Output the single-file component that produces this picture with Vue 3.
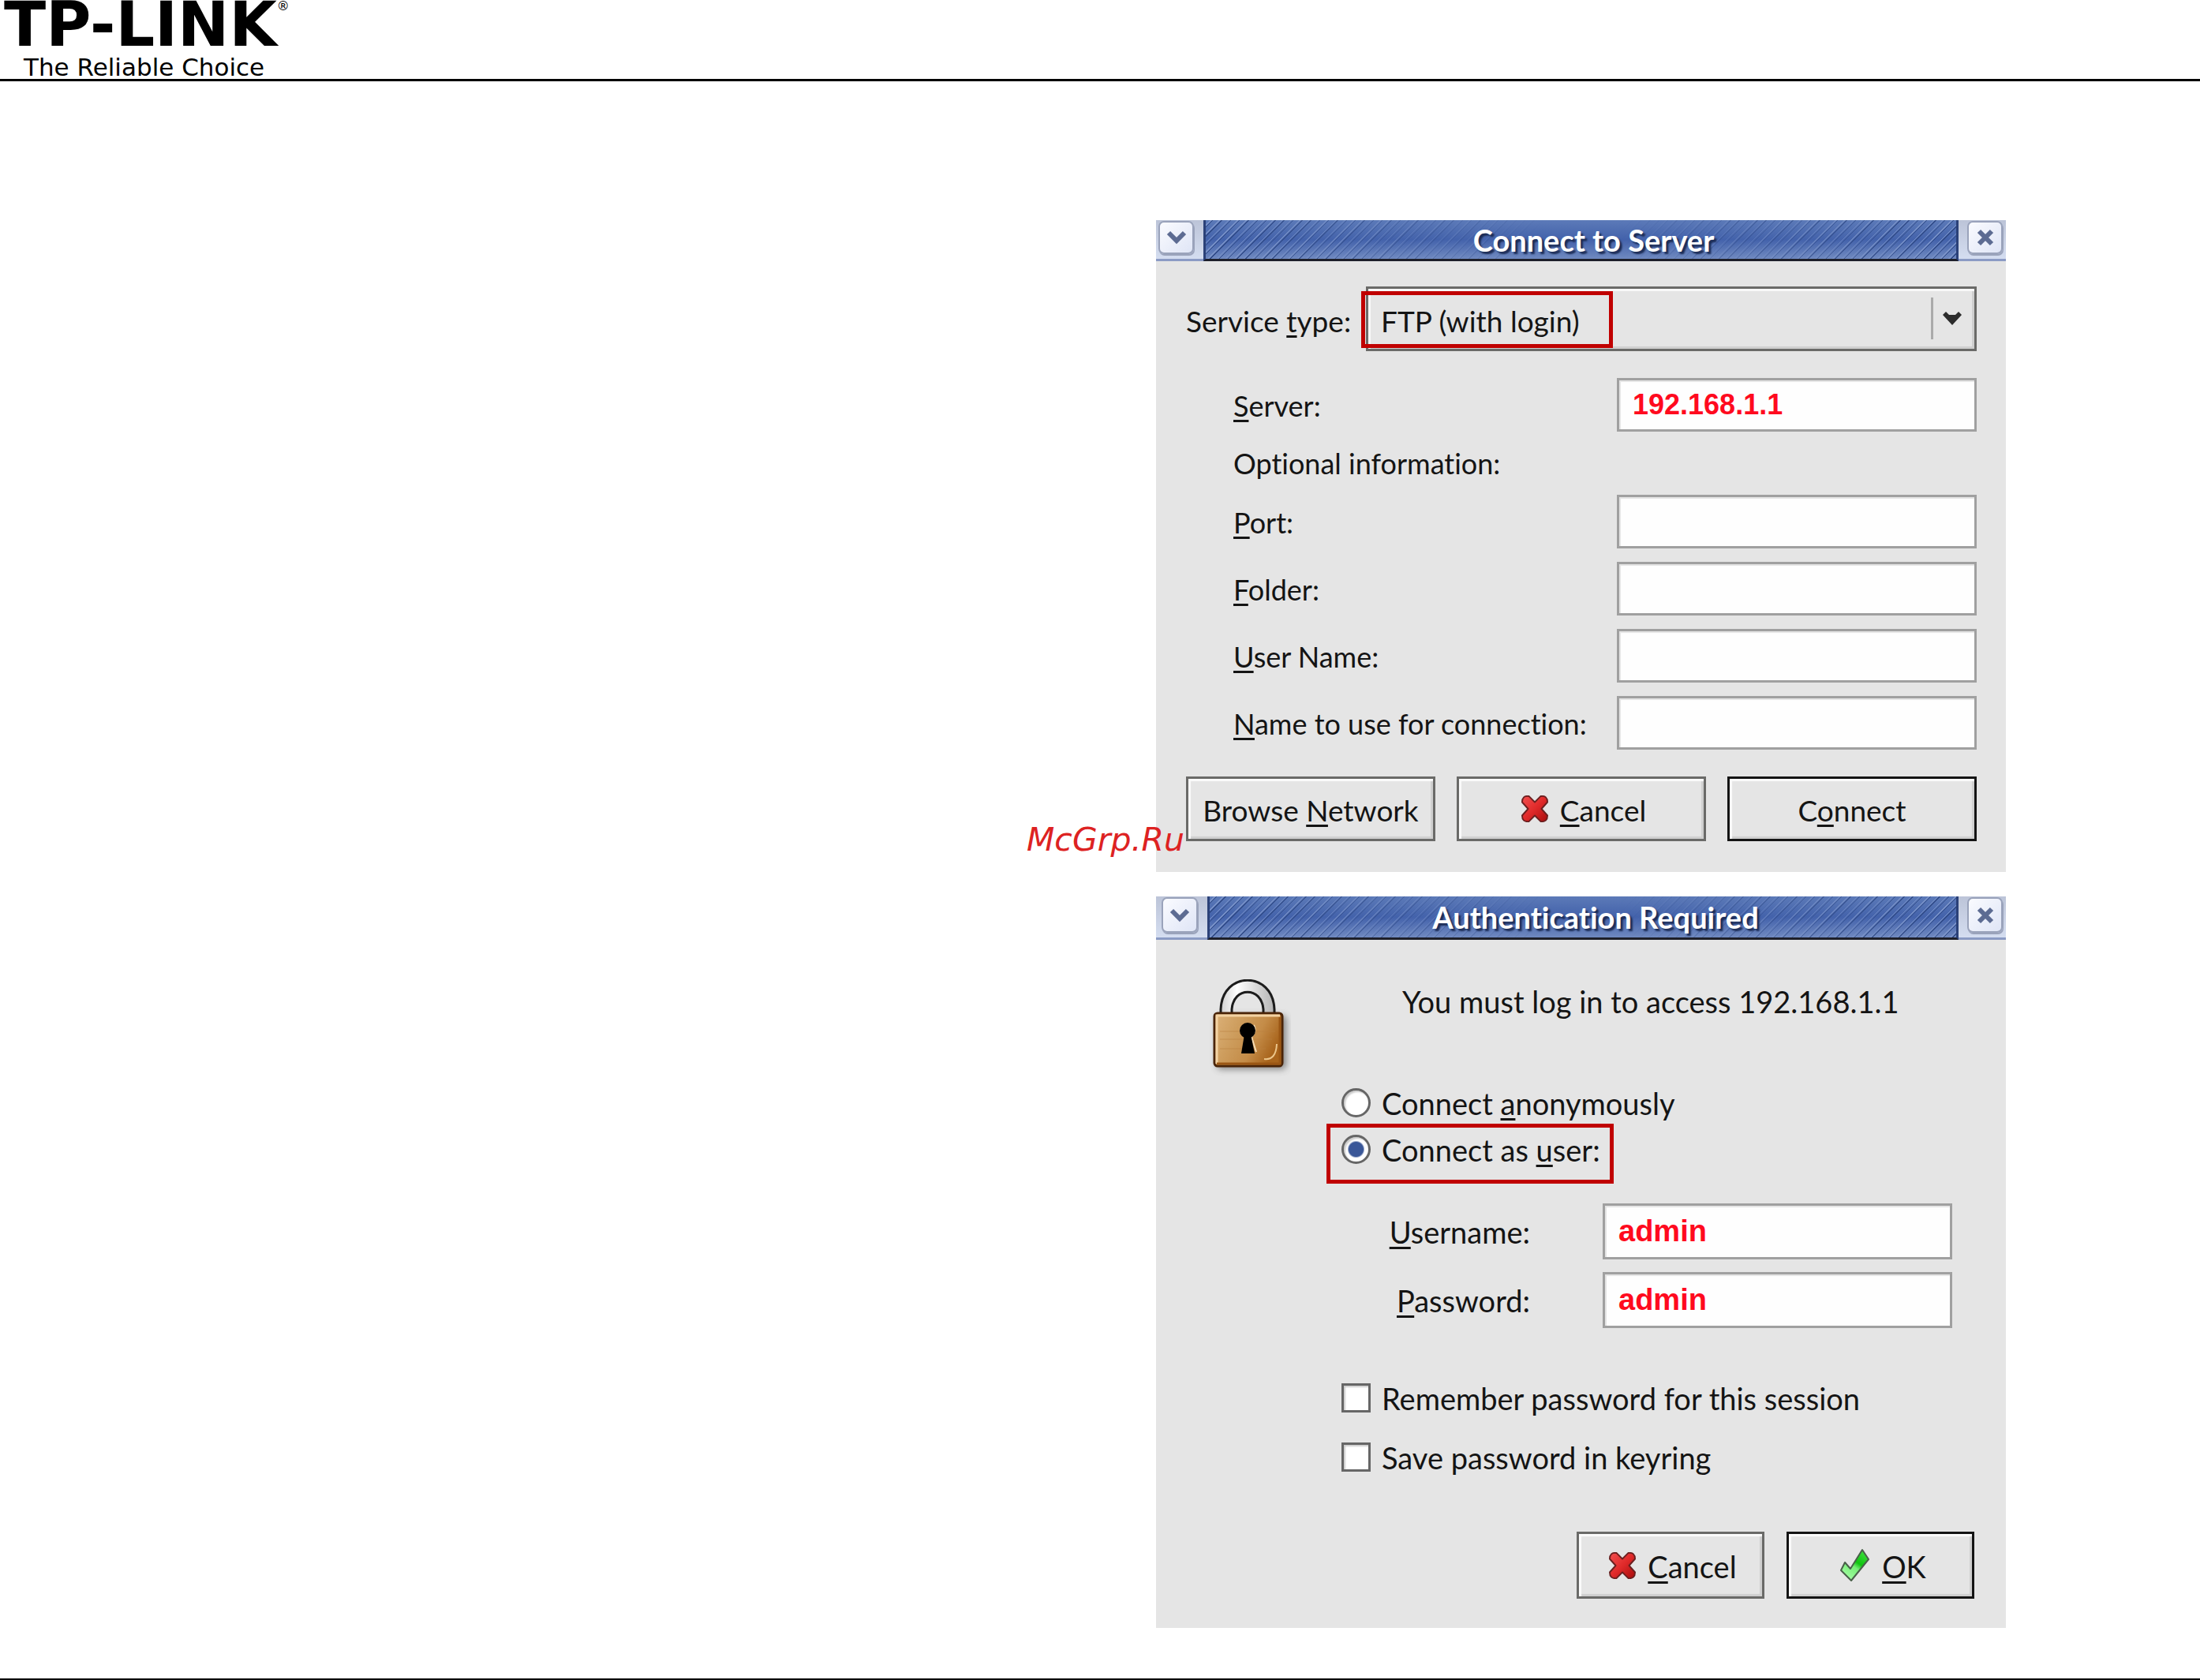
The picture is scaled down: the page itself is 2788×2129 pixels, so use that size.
<script setup>
import { ref, reactive } from 'vue'

const serviceType = ref('FTP (with login)')
const server = ref('192.168.1.1')

const optionalFields = reactive([
  { id: 'port', key: 'P', rest: 'ort:', value: '' },
  { id: 'folder', key: 'F', rest: 'older:', value: '' },
  { id: 'user-name', key: 'U', rest: 'ser Name:', value: '' },
  { id: 'connection-name', key: 'N', rest: 'ame to use for connection:', value: '' },
])

const loginMode = ref('user')
const username = ref('admin')
const password = ref('admin')
const remember = ref(false)
const keyring = ref(false)
</script>

<template>
  <div class="page">
    <header class="pageHeader">
      <div class="wordmark">TP-LINK<span class="registered">®</span></div>
      <div class="tagline">The Reliable Choice</div>
    </header>

    <main class="content">
      <div class="dialogs">
        <section class="dialog">
          <div class="titlebar">
            <div class="corner">
              <button class="windowButton" aria-label="Window menu">
                <svg width="26" height="18" viewBox="0 0 26 18"><path d="M3 3 L13 13 L23 3" fill="none" stroke="#5c6b92" stroke-width="6" /></svg>
              </button>
            </div>
            <h2 class="title">Connect to Server</h2>
            <div class="corner">
              <button class="windowButton" aria-label="Close">
                <svg width="22" height="22" viewBox="0 0 22 22"><path d="M3 3 L19 19 M19 3 L3 19" fill="none" stroke="#5c6b92" stroke-width="6" /></svg>
              </button>
            </div>
          </div>

          <form class="serverBody" @submit.prevent>
            <div class="serviceRow">
              <label for="service">Service <u>t</u>ype:</label>
              <div class="selectWrap">
                <select id="service" v-model="serviceType">
                  <option>FTP (with login)</option>
                </select>
                <span class="selectArrow">
                  <svg width="26" height="20" viewBox="0 0 26 20"><path d="M1 5 L5 1 L9 5 H17 L21 1 L25 5 L13 18 Z" fill="#2c2c2c" /></svg>
                </span>
                <span class="highlight serviceHighlight"></span>
              </div>
            </div>

            <div class="fieldRow">
              <label for="server"><u>S</u>erver:</label>
              <input id="server" type="text" v-model="server" />
            </div>
            <div class="optional">Optional information:</div>
            <div class="fieldList">
              <div v-for="field in optionalFields" :key="field.id" class="fieldRow">
                <label :for="field.id"><u>{{ field.key }}</u>{{ field.rest }}</label>
                <input :id="field.id" type="text" v-model="field.value" />
              </div>
            </div>

            <div class="serverButtons">
              <button type="button" class="button"><span>Browse <u>N</u>etwork</span></button>
              <button type="button" class="button withIcon">
                <svg width="34" height="34" viewBox="0 0 36 36">
                  <path d="M10 1 L18 9 L26 1 Q35 0 35 9 L27 18 L35 27 Q35 36 26 35 L18 27 L10 35 Q1 36 1 27 L9 18 L1 9 Q1 0 10 1 Z" fill="url(#crossFill)" stroke="#6b2020" stroke-width="2" stroke-linejoin="round" />
                  <defs>
                    <linearGradient id="crossFill" x1="0" y1="0" x2="1" y2="1">
                      <stop offset="0" stop-color="#f25050" />
                      <stop offset="0.5" stop-color="#e02a2a" />
                      <stop offset="1" stop-color="#a80c0c" />
                    </linearGradient>
                  </defs>
                </svg>
                <span><u>C</u>ancel</span>
              </button>
              <button type="submit" class="button default"><span>C<u>o</u>nnect</span></button>
            </div>
          </form>
          <div class="watermark">McGrp.Ru</div>
        </section>

        <section class="dialog">
          <div class="titlebar tall">
            <div class="corner">
              <button class="windowButton" aria-label="Window menu">
                <svg width="26" height="18" viewBox="0 0 26 18"><path d="M3 3 L13 13 L23 3" fill="none" stroke="#5c6b92" stroke-width="6" /></svg>
              </button>
            </div>
            <h2 class="title">Authentication Required</h2>
            <div class="corner">
              <button class="windowButton" aria-label="Close">
                <svg width="22" height="22" viewBox="0 0 22 22"><path d="M3 3 L19 19 M19 3 L3 19" fill="none" stroke="#5c6b92" stroke-width="6" /></svg>
              </button>
            </div>
          </div>

          <form class="authBody" @submit.prevent>
            <div class="authMessage">
              <svg width="104" height="127" viewBox="0 0 104 127">
                <defs>
                  <linearGradient id="brass" x1="0" y1="0" x2="1" y2="0.4">
                    <stop offset="0" stop-color="#dcb27a" />
                    <stop offset="0.4" stop-color="#cd9c5c" />
                    <stop offset="0.7" stop-color="#c48c48" />
                    <stop offset="1" stop-color="#a8641c" />
                  </linearGradient>
                  <linearGradient id="steel" x1="0" y1="0" x2="1" y2="0">
                    <stop offset="0" stop-color="#d0d0d0" />
                    <stop offset="0.3" stop-color="#ffffff" />
                    <stop offset="1" stop-color="#b4b4b4" />
                  </linearGradient>
                  <filter id="soft" x="-20%" y="-20%" width="140%" height="140%">
                    <feGaussianBlur stdDeviation="4" />
                  </filter>
                </defs>
                <rect x="10" y="46" width="88" height="68" rx="5" fill="#444444" opacity="0.6" filter="url(#soft)" />
                <path d="M15 46 V38 C17 -11 81 -11 83 38 V46 H69 V38 C67 9 31 9 29 38 V46 Z" fill="url(#steel)" stroke="#1c1c1c" stroke-width="3" />
                <rect x="7" y="43" width="86" height="67" rx="4" fill="url(#brass)" stroke="#4a2408" stroke-width="3" />
                <path d="M10 107 V46 H90" fill="none" stroke="#f3d3a4" stroke-width="3" />
                <path d="M10 107 H90 V48" fill="none" stroke="#9a5614" stroke-width="3" />
                <path d="M70 101 Q85 103 86 82" fill="none" stroke="#ecc68c" stroke-width="2" />
                <path d="M14 66 H84 M14 76 H80 M14 88 H72" stroke="#b98040" stroke-width="1" opacity="0.6" />
                <path d="M57 58 Q61 66 54 73 L60 92" fill="none" stroke="#f6dcb4" stroke-width="2" />
                <circle cx="49" cy="65" r="10" fill="#000000" />
                <path d="M45 70 H53 L58 94 H41 Z" fill="#000000" />
              </svg>
              <p>You must log in to access 192.168.1.1</p>
            </div>

            <div class="choices">
              <label class="choice">
                <input type="radio" name="mode" value="anonymous" v-model="loginMode" />
                <span>Connect <u>a</u>nonymously</span>
              </label>
              <label class="choice">
                <input type="radio" name="mode" value="user" v-model="loginMode" />
                <span>Connect as <u>u</u>ser:</span>
                <span class="highlight userHighlight"></span>
              </label>
            </div>

            <div class="credentials">
              <label for="username"><u>U</u>sername:</label>
              <input id="username" type="text" v-model="username" />
              <label for="password"><u>P</u>assword:</label>
              <input id="password" type="text" v-model="password" />
            </div>

            <div class="options">
              <label class="option">
                <input type="checkbox" v-model="remember" />
                <span>Remember password for this session</span>
              </label>
              <label class="option">
                <input type="checkbox" v-model="keyring" />
                <span>Save password in keyring</span>
              </label>
            </div>

            <div class="authButtons">
              <button type="button" class="button withIcon">
                <svg width="34" height="34" viewBox="0 0 36 36">
                  <path d="M10 1 L18 9 L26 1 Q35 0 35 9 L27 18 L35 27 Q35 36 26 35 L18 27 L10 35 Q1 36 1 27 L9 18 L1 9 Q1 0 10 1 Z" fill="url(#crossFill)" stroke="#6b2020" stroke-width="2" stroke-linejoin="round" />
                </svg>
                <span><u>C</u>ancel</span>
              </button>
              <button type="submit" class="button default withIcon">
                <svg width="39" height="43" viewBox="0 0 39 43">
                  <defs>
                    <linearGradient id="checkFill" x1="0.2" y1="1" x2="0.8" y2="0">
                      <stop offset="0" stop-color="#a8ffa8" />
                      <stop offset="0.45" stop-color="#78ee78" />
                      <stop offset="0.6" stop-color="#10c410" />
                      <stop offset="1" stop-color="#40e040" />
                    </linearGradient>
                  </defs>
                  <path d="M2 28 L7 18 L14 26 L29 2 L37 14 L15 41 Z" fill="url(#checkFill)" stroke="#4a604a" stroke-width="2" stroke-linejoin="round" />
                </svg>
                <span><u>O</u>K</span>
              </button>
            </div>
          </form>
        </section>
      </div>
    </main>
  </div>
</template>

<style>
body {
  margin: 0;
  background: #ffffff;
}
</style>

<style scoped>
.page {
  min-height: 100vh;
  box-sizing: border-box;
  border-bottom: 2px solid #000000;
  font-family: Lato, "Liberation Sans", sans-serif;
  font-size: 37px;
  font-variant-ligatures: none;
  color: #141414;
}

.pageHeader {
  border-bottom: 3px solid #000000;
  color: #000000;
}

.wordmark {
  display: flex;
  align-items: flex-start;
  padding-left: 5px;
  font: bold 78px/62px "DejaVu Sans", sans-serif;
}

.registered {
  font: 16px/16px "DejaVu Sans", sans-serif;
}

.tagline {
  padding: 8px 0 0 30px;
  font: 31px/30px "DejaVu Sans", sans-serif;
}

.content {
  display: grid;
  grid-template-columns: 1465fr 1077fr 246fr;
  padding: 176px 0 62px;
}

.dialogs {
  grid-column: 2;
  display: flex;
  flex-direction: column;
  gap: 31px;
}

.dialog {
  position: relative;
  background: #e5e5e5;
}

.titlebar {
  display: flex;
  height: 52px;
}

.titlebar.tall {
  height: 55px;
}

.corner {
  width: 60px;
  box-sizing: border-box;
  border-bottom: 3px solid #8b9bc4;
  padding: 1px 12px 6px 3px;
  display: flex;
  background: linear-gradient(#bcc4d8, #d4ddf0);
}

.corner:last-child {
  padding: 1px 4px 6px 11px;
}

.tall .corner:first-child {
  width: 65px;
  padding-left: 7px;
}

.windowButton {
  flex: 1;
  display: flex;
  align-items: center;
  justify-content: center;
  padding: 0;
  border: 2px solid #9aa3bb;
  border-radius: 7px;
  background: linear-gradient(135deg, #fafbff, #dfe5f6);
  box-shadow: 1px 2px 0 #9aa3bb;
}

.title {
  position: relative;
  flex: 1;
  display: flex;
  align-items: center;
  justify-content: center;
  margin: 0;
  padding: 0 0 0 32px;
  border: 3px solid #2b4178;
  border-width: 0 3px 3px;
  border-bottom-color: #1d1f2a;
  background: linear-gradient(#5c7ab8, #4362ab 50%, #6f89c0);
  color: #ffffff;
  font-size: 38px;
  line-height: 44px;
  font-weight: bold;
  text-shadow: 3px 3px 2px #1c2c55;
  z-index: 0;
}

/* diagonal stripes, fading out behind the title */
.title::before {
  content: "";
  position: absolute;
  inset: 0;
  z-index: -1;
  background: repeating-linear-gradient(135deg, transparent 0 4px, #7c94c8 4px 5px, transparent 5px 6px, #2f4985 6px 7px, transparent 7px 8px);
  mask-image: linear-gradient(90deg, #000000, transparent 45%, transparent 55%, #000000);
}

u {
  text-decoration-thickness: 3px;
  text-underline-offset: 4px;
  text-decoration-skip-ink: none;
}

input[type="text"] {
  box-sizing: border-box;
  width: 100%;
  height: 68px;
  margin: 0;
  padding: 0 17px;
  border: 3px solid #a0a0a0;
  border-radius: 0;
  background: #fefefe;
  box-shadow: inset 2px 2px 1px #e4e4e4;
  color: #ff0a1e;
  font: bold 36px "Liberation Sans", sans-serif;
}

.highlight {
  position: absolute;
  box-sizing: border-box;
  border: 5px solid #c00000;
  pointer-events: none;
}

.serverBody {
  padding: 32px 37px 39px 38px;
}

.serviceRow {
  display: grid;
  grid-template-columns: 228px 1fr;
  align-items: center;
  margin-bottom: 34px;
}

.serviceRow label {
  padding-top: 4px;
}

.selectWrap {
  position: relative;
}

select {
  display: block;
  appearance: none;
  box-sizing: border-box;
  width: 100%;
  height: 82px;
  padding: 4px 90px 0 16px;
  border: 3px solid #6a6a68;
  border-radius: 0;
  background: #e5e5e5;
  box-shadow: inset 3px 3px 0 #f8f8f8, inset -3px -3px 0 #cfcfcf;
  color: inherit;
  font: inherit;
}

.selectArrow {
  position: absolute;
  top: 14px;
  right: 18px;
  height: 53px;
  padding-left: 11px;
  border-left: 3px solid #aaaaaa;
  display: flex;
  align-items: center;
  pointer-events: none;
}

.serviceHighlight {
  left: -6px;
  top: 6px;
  width: 319px;
  height: 72px;
}

.fieldRow {
  display: grid;
  grid-template-columns: 1fr 456px;
  align-items: center;
  padding-left: 60px;
  font-size: 36px;
}

.fieldRow label {
  padding-top: 2px;
}

.optional {
  padding-left: 60px;
  font-size: 36px;
  line-height: 80px;
}

.fieldList {
  display: flex;
  flex-direction: column;
  gap: 17px;
}

.serverButtons {
  display: grid;
  grid-template-columns: repeat(3, 1fr);
  gap: 27px;
  margin-top: 34px;
}

.button {
  box-sizing: border-box;
  height: 82px;
  padding: 2px 0 0;
  display: flex;
  align-items: center;
  justify-content: center;
  gap: 15px;
  border: 3px solid #6a6a68;
  border-radius: 0;
  background: #e5e5e5;
  box-shadow: inset 3px 3px 1px #fbfbfb, inset -3px -3px 1px #cfcfcf;
  color: inherit;
  font: inherit;
}

.button.default {
  border-color: #141414;
}

.button.withIcon {
  padding-left: 6px;
}

.button svg {
  margin-top: -2px;
}

.watermark {
  position: absolute;
  left: -164px;
  bottom: 21px;
  font: italic 41px/40px "DejaVu Sans", sans-serif;
  color: #dd2222;
}

.authBody {
  padding: 50px 40px 37px 235px;
  font-size: 38px;
}

.authMessage {
  display: flex;
  height: 127px;
  margin-left: -168px;
}

.authMessage p {
  margin: 0;
  padding-left: 141px;
  line-height: 56px;
}

.choice,
.option {
  position: relative;
  display: flex;
  align-items: center;
  gap: 14px;
}

.choice {
  height: 59px;
}

.option {
  height: 75px;
}

.choice input,
.option input {
  appearance: none;
  box-sizing: border-box;
  flex: none;
  width: 37px;
  height: 37px;
  margin: 0;
  border: 3px solid #666666;
  background: #ffffff;
  box-shadow: inset 2px 2px 2px #cccccc;
}

.choice input {
  border-radius: 50%;
}

.choice input:checked {
  background: radial-gradient(circle at 50% 50%, #3a5798 9px, #ffffff 11px);
}

.option input:checked {
  background: #3a5798;
}

.userHighlight {
  left: -19px;
  top: -3px;
  width: 364px;
  height: 76px;
}

.credentials {
  display: grid;
  grid-template-columns: 239px 1fr;
  align-items: center;
  gap: 16px 92px;
  margin: 39px 28px 51px 0;
}

.credentials label {
  text-align: right;
}

.credentials input[type="text"] {
  height: 71px;
  font-size: 38px;
}

.authButtons {
  display: flex;
  justify-content: flex-end;
  gap: 28px;
  margin-top: 57px;
}

.authButtons .button {
  width: 238px;
  height: 85px;
}
</style>
